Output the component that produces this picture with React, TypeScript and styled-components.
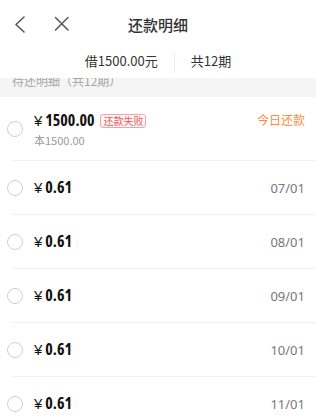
import React from "react";
import styled, { createGlobalStyle } from "styled-components";

const Global = createGlobalStyle`
  html, body { margin: 0; padding: 0; background: #fff; }
  body {
    font-family: "Noto Sans CJK SC", "Noto Sans", sans-serif;
    color: #333;
    -webkit-font-smoothing: antialiased;
  }
  * { box-sizing: border-box; }
`;

const Page = styled.div`
  width: 316px;
  height: 418px;
  overflow: hidden;
  background: #fff;
`;

const NavBar = styled.div`
  height: 48px;
  display: grid;
  grid-template-columns: 1fr auto 1fr;
  align-items: center;
`;

const NavLeft = styled.div`
  display: flex;
  align-items: center;
  gap: 28px;
  padding-left: 14px;
`;

const Title = styled.div`
  font-size: 15px;
  line-height: 20px;
  color: #333;
  font-weight: 500;
  padding-top: 2px;
`;

const Summary = styled.div`
  height: 30px;
  padding-bottom: 6px;
  display: flex;
  align-items: center;
  justify-content: center;
  gap: 16px;
  font-size: 13px;
  color: #333;
`;

const SummaryDivider = styled.div`
  width: 1px;
  height: 20px;
  background: #ececec;
  margin-top: 6px;
`;

const SectionBand = styled.div`
  height: 19px;
  background: #f5f5f5;
  overflow: hidden;
  padding-left: 12px;
`;

const SectionText = styled.div`
  margin-top: -4px;
  font-size: 12px;
  line-height: 14px;
  color: #a6a6a6;
`;

const Row = styled.div<{ $tall?: boolean }>`
  height: ${(p) => (p.$tall ? 63 : 53)}px;
  display: flex;
  align-items: center;
  padding-right: 11px;
`;

const Radio = styled.div`
  width: 16px;
  height: 16px;
  border-radius: 50%;
  border: 1px solid #cfcfcf;
  margin-left: 7px;
  margin-right: 11px;
  flex-shrink: 0;
`;

const Body = styled.div`
  flex: 1;
  display: flex;
  flex-direction: column;
`;

const TopLine = styled.div`
  display: flex;
  align-items: center;
  height: 20px;
`;

const Amount = styled.div`
  display: flex;
  align-items: baseline;
  color: #111;
  line-height: 20px;
`;

const Yen = styled.span`
  font-family: "Liberation Sans", sans-serif;
  font-size: 15px;
  font-weight: 400;
  margin-right: 3px;
`;

const Num = styled.span`
  font-family: "Open Sans", "Roboto", sans-serif;
  font-stretch: 75%;
  font-size: 16px;
  font-weight: 700;
`;

const Badge = styled.span`
  margin-left: 6px;
  height: 14px;
  padding: 0 2px;
  border: 1px solid #f3a3a3;
  border-radius: 3px;
  background: #fff7f7;
  color: #ec5b5b;
  font-size: 10px;
  line-height: 12px;
  display: inline-flex;
  align-items: center;
`;

const RightText = styled.span<{ $accent?: boolean }>`
  margin-left: auto;
  font-size: ${(p) => (p.$accent ? 12 : 13)}px;
  color: ${(p) => (p.$accent ? "#ff8a3d" : "#777")};
  font-family: ${(p) =>
    p.$accent ? `"Noto Sans CJK SC", sans-serif` : `"Noto Sans", sans-serif`};
  align-self: ${(p) => (p.$accent ? "flex-start" : "center")};
  line-height: 18px;
`;

const SubLine = styled.div`
  margin-top: 2px;
  font-size: 11px;
  line-height: 14px;
  color: #9a9a9a;
`;

const Divider = styled.div`
  height: 1px;
  background: #f1f1f1;
  margin-left: 12px;
`;

const BackIcon = () => (
  <svg width="12" height="18" viewBox="0 0 12 18">
    <polyline
      points="10,2 2,9.5 10,17"
      fill="none"
      stroke="#555"
      strokeWidth="1.5"
      strokeLinecap="round"
      strokeLinejoin="round"
    />
  </svg>
);

const CloseIcon = () => (
  <svg width="16" height="16" viewBox="0 0 16 16">
    <path
      d="M1.5 1.5 L14 14 M14 1.5 L1.5 14"
      fill="none"
      stroke="#555"
      strokeWidth="1.5"
      strokeLinecap="round"
    />
  </svg>
);

const dates = ["07/01", "08/01", "09/01", "10/01", "11/01", "12/01"];

export default function App() {
  return (
    <>
      <Global />
      <Page>
        <NavBar>
          <NavLeft>
            <BackIcon />
            <CloseIcon />
          </NavLeft>
          <Title>还款明细</Title>
          <div />
        </NavBar>
        <Summary>
          <span>借1500.00元</span>
          <SummaryDivider />
          <span>共12期</span>
        </Summary>
        <SectionBand>
          <SectionText>待还明细（共12期）</SectionText>
        </SectionBand>
        <Row $tall>
          <Radio />
          <Body>
            <TopLine>
              <Amount>
                <Yen>¥</Yen>
                <Num>1500.00</Num>
              </Amount>
              <Badge>还款失败</Badge>
              <RightText $accent>今日还款</RightText>
            </TopLine>
            <SubLine>本1500.00</SubLine>
          </Body>
        </Row>
        {dates.map((d) => (
          <React.Fragment key={d}>
            <Divider />
            <Row>
              <Radio />
              <Body>
                <TopLine>
                  <Amount>
                    <Yen>¥</Yen>
                    <Num>0.61</Num>
                  </Amount>
                  <RightText>{d}</RightText>
                </TopLine>
              </Body>
            </Row>
          </React.Fragment>
        ))}
      </Page>
    </>
  );
}
